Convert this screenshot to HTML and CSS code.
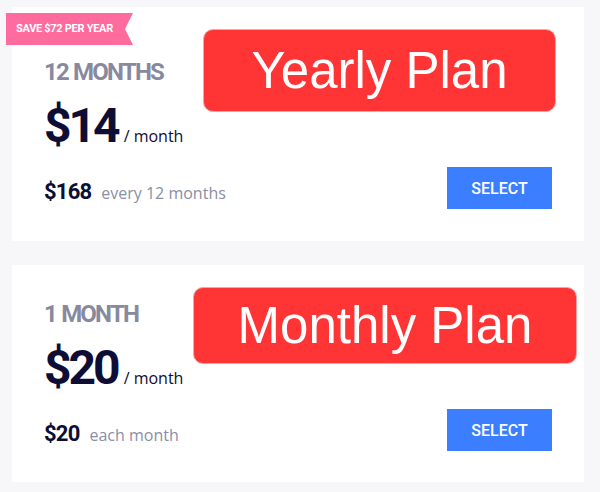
FILE: index.html
```html
<!DOCTYPE html>
<html lang="en">
<head>
<meta charset="utf-8">
<title>Plans</title>
<link rel="stylesheet" href="styles.css">
</head>
<body>
<main class="plans">
  <section class="card card--featured">
    <div class="ribbon">SAVE $72 PER YEAR</div>
    <h2 class="plan-name">12 MONTHS</h2>
    <div class="price-row">
      <span class="price">$14</span>
      <span class="per">/ month</span>
    </div>
    <div class="footer-row">
      <div class="footer-info">
        <span class="total">$168</span>
        <span class="note">every 12 months</span>
      </div>
      <button class="select-btn" type="button">SELECT</button>
    </div>
    <div class="annotation annotation--yearly">Yearly Plan</div>
  </section>

  <section class="card">
    <h2 class="plan-name">1 MONTH</h2>
    <div class="price-row">
      <span class="price">$20</span>
      <span class="per">/ month</span>
    </div>
    <div class="footer-row">
      <div class="footer-info">
        <span class="total">$20</span>
        <span class="note">each month</span>
      </div>
      <button class="select-btn" type="button">SELECT</button>
    </div>
    <div class="annotation annotation--monthly">Monthly Plan</div>
  </section>
</main>
</body>
</html>
```

FILE: styles.css
```css
* { box-sizing: border-box; }

html, body {
  margin: 0;
  background: #f7f7f9;
}

body {
  font-family: Roboto, "Liberation Sans", sans-serif;
  color: #0d0d35;
}

.plans {
  display: flex;
  flex-direction: column;
  gap: 24px;
  padding: 7px 16px 0 12px;
}

.card {
  position: relative;
  background: #ffffff;
  padding: 35px 32px 31px 32px;
}

.card--featured {
  padding-top: 51px;
  padding-bottom: 32px;
}

.ribbon {
  position: absolute;
  left: -6px;
  top: 6px;
  width: 127px;
  height: 32px;
  padding-left: 10px;
  background: #ff6b9c;
  color: #ffffff;
  font-family: Roboto, sans-serif;
  font-weight: 700;
  font-size: 11px;
  letter-spacing: -0.3px;
  line-height: 32px;
  white-space: nowrap;
  clip-path: polygon(0 0, 100% 0, calc(100% - 8px) 50%, 100% 100%, 0 100%);
}

.plan-name {
  margin: 0;
  font-family: Roboto, sans-serif;
  font-weight: 700;
  font-size: 24px;
  line-height: 28px;
  letter-spacing: -1.8px;
  word-spacing: 1px;
  color: #878a9e;
}

.price-row {
  display: flex;
  align-items: baseline;
  margin-top: 14px;
}

.price {
  font-family: Roboto, sans-serif;
  font-weight: 700;
  font-size: 48px;
  line-height: 52px;
  letter-spacing: -3px;
  color: #0d0d35;
}

.per {
  margin-left: 6px;
  font-family: "Open Sans", sans-serif;
  font-size: 16px;
  color: #0d0d35;
}

.footer-row {
  display: flex;
  align-items: center;
  justify-content: space-between;
  margin-top: 15px;
}

.footer-info {
  display: flex;
  align-items: baseline;
  padding-top: 9px;
  line-height: 24px;
}

.total {
  font-family: Roboto, sans-serif;
  font-weight: 700;
  font-size: 22px;
  letter-spacing: -0.8px;
  color: #0d0d35;
}

.note {
  margin-left: 10px;
  font-family: "Open Sans", sans-serif;
  font-size: 16px;
  color: #8a8ea6;
}

.select-btn {
  width: 105px;
  height: 42px;
  border: none;
  border-radius: 0;
  background: #3b7eff;
  color: #ffffff;
  font-family: Roboto, sans-serif;
  font-weight: 500;
  font-size: 16px;
  padding: 0;
}

.annotation {
  position: absolute;
  display: flex;
  align-items: center;
  justify-content: center;
  background: #ff3535;
  border: 1px solid #f7a5a5;
  border-radius: 10px;
  color: #ffffff;
  font-family: "Liberation Sans", Arial, sans-serif;
  font-size: 51px;
  white-space: nowrap;
}

.annotation--yearly {
  left: 191px;
  top: 22px;
  width: 353px;
  height: 83px;
}

.annotation--monthly {
  left: 181px;
  top: 22px;
  width: 384px;
  height: 77px;
}
```
